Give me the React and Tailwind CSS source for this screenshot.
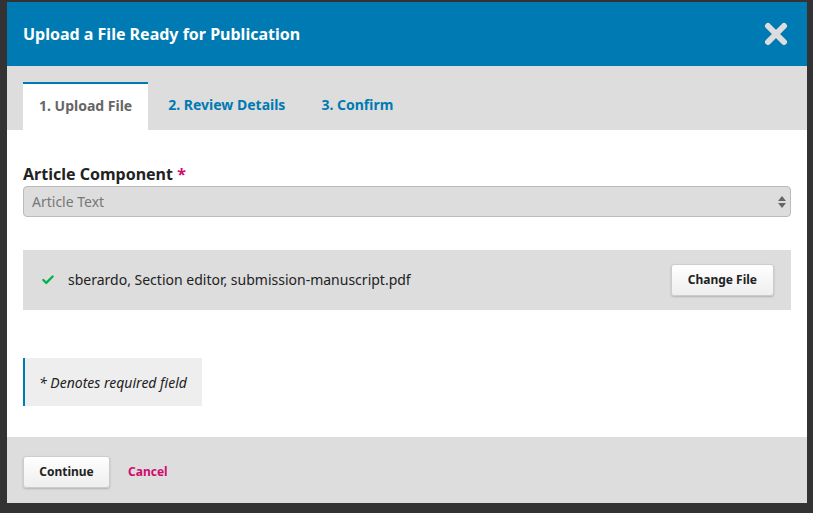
import { Check } from "lucide-react";

const tabs = ["1. Upload File", "2. Review Details", "3. Confirm"];

const App = () => {
  return (
    <div
      className="w-[813px] h-[513px] bg-[#333333] overflow-hidden pt-[2px] pl-[7px]"
      style={{ fontFamily: '"Noto Sans", "Open Sans", sans-serif' }}
    >
      <div className="w-[800px] h-[501px] flex flex-col bg-white">
        {/* Header */}
        <div className="h-[64px] shrink-0 bg-[#007ab2] flex items-center justify-between pl-[16px] pr-[20px]">
          <h2 className="text-white text-[16px] font-bold">
            Upload a File Ready for Publication
          </h2>
          <svg width="24" height="24" viewBox="0 0 24 24" className="mr-[-1px]">
            <path
              d="M4 4 L20 20 M20 4 L4 20"
              stroke="#dddddd"
              strokeWidth="6"
              strokeLinecap="round"
            />
          </svg>
        </div>

        {/* Tabs */}
        <div className="h-[64px] shrink-0 bg-[#dddddd] flex items-end pl-[16px]">
          {tabs.map((t, i) => (
            <div
              key={t}
              className={`h-[48px] pb-[3px] flex items-center text-[14px] font-bold ${
                i === 0
                  ? "px-[16px] bg-white border-t-2 border-[#007ab2] text-[#666666]"
                  : "pl-[20px] pr-[16px] text-[#007ab2]"
              }`}
            >
              {t}
            </div>
          ))}
        </div>

        {/* Body */}
        <div className="flex-1 px-[16px] pt-[33px]">
          <label className="block text-[16px] font-bold text-[#222222] leading-[22px]">
            Article Component <span className="text-[#d00a6c]">*</span>
          </label>
          <div className="mt-[1px] h-[31px] bg-[#dddddd] border border-[#bbbbbb] rounded-[4px] flex items-center justify-between pl-[8px] pr-[4px]">
            <span className="text-[14px] text-[#777777]">Article Text</span>
            <div className="flex flex-col">
              <svg width="8" height="5" viewBox="0 0 8 5">
                <path d="M4 0 L8 5 L0 5 Z" fill="#666" />
              </svg>
              <svg width="8" height="5" viewBox="0 0 8 5" className="mt-[2px]">
                <path d="M0 0 L8 0 L4 5 Z" fill="#666" />
              </svg>
            </div>
          </div>

          <div className="mt-[33px] h-[60px] bg-[#dddddd] flex items-center justify-between pl-[18px] pr-[17px]">
            <div className="flex items-center gap-[13px] pb-[1px]">
              <Check className="w-[14px] h-[14px] text-[#00b24e]" strokeWidth={4} />
              <span className="text-[14px] text-[#222222]">
                sberardo, Section editor, submission-manuscript.pdf
              </span>
            </div>
            <button className="h-[32px] px-[16px] rounded-[3px] bg-gradient-to-b from-white to-[#eeeeee] border border-[#cccccc] shadow-[0_1px_2px_rgba(0,0,0,0.2)] text-[12px] font-bold text-[#222222]">
              Change File
            </button>
          </div>

          <div className="mt-[48px] w-[179px] h-[48px] bg-[#eeeeee] border-l-2 border-[#007ab2] flex items-center pl-[14px]">
            <span className="text-[14px] italic text-[#222222]">
              * Denotes required field
            </span>
          </div>
        </div>

        {/* Footer */}
        <div className="h-[66px] shrink-0 bg-[#dddddd] flex items-center gap-[18px] px-[16px] pt-[3px]">
          <button className="h-[32px] w-[87px] rounded-[3px] bg-gradient-to-b from-white to-[#eeeeee] border border-[#cccccc] shadow-[0_1px_2px_rgba(0,0,0,0.2)] text-[12px] font-bold text-[#222222]">
            Continue
          </button>
          <a className="text-[12px] font-bold text-[#d00a6c]">Cancel</a>
        </div>
      </div>
    </div>
  );
};

export default App;
